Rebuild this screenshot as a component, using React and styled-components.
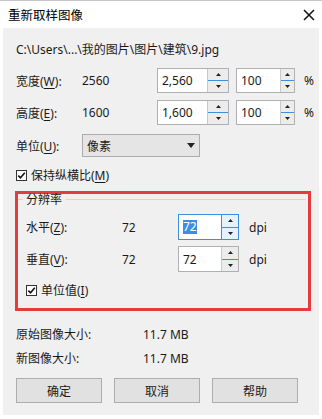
import React from 'react';
import styled, { createGlobalStyle } from 'styled-components';

const GlobalStyle = createGlobalStyle`
  body {
    margin: 0;
    background: #ffffff;
    font-family: "Noto Sans", "Noto Sans CJK SC", sans-serif;
    font-size: 12px;
    color: #1a1a1a;
  }
`;

const Window = styled.div`
  width: 322px;
  height: 419px;
  box-sizing: border-box;
  border-top: 1px solid #c6c6c6;
  background: #ffffff;
  display: flex;
  flex-direction: column;
`;

const TitleBar = styled.div`
  height: 27px;
  display: flex;
  align-items: center;
  justify-content: space-between;
  padding: 0 7px 0 8px;
  font-size: 12.5px;
  color: #000;
`;

const Close = styled.svg`
  width: 12px;
  height: 12px;
`;

const Content = styled.div`
  margin: 0 3px;
  height: 387px;
  background: #f0f0f0;
  display: flex;
  flex-direction: column;
  padding-left: 13px;
`;

const Row = styled.div`
  display: flex;
  align-items: center;
  height: ${(p) => p.$h || 20}px;
  margin-top: ${(p) => p.$mt || 0}px;
`;

const Label = styled.span`
  width: ${(p) => p.$w}px;
  flex: none;
  white-space: nowrap;
`;

const Key = styled.span`
  text-decoration: underline;
  text-underline-offset: 2px;
`;

const SpinBox = styled.div`
  width: ${(p) => p.$w}px;
  height: 100%;
  box-sizing: border-box;
  flex: none;
  display: flex;
  background: #fff;
  border: 1px solid ${(p) => (p.$focus ? '#3b8fe0' : '#aeb0b5')};
`;

const Field = styled.div`
  flex: 1;
  display: flex;
  align-items: center;
  padding-left: 4px;
`;

const Selected = styled.span`
  background: #3b8ee4;
  color: #fff;
  line-height: 14px;
`;

const Spin = styled.div`
  width: ${(p) => p.$w}px;
  flex: none;
  display: flex;
  flex-direction: column;
  border-left: 1px solid ${(p) => (p.$focus ? '#3b8fe0' : '#c9c9c9')};
  background: ${(p) => (p.$focus ? '#e5f1fb' : '#ececec')};
`;

const SpinHalf = styled.div`
  flex: 1;
  display: flex;
  align-items: center;
  justify-content: center;
  & + & {
    border-top: 1px solid ${(p) => (p.$focus ? '#3b8fe0' : 'transparent')};
  }
`;

const Arrow = ({ up }) => (
  <svg width="5" height="3" viewBox="0 0 5 3">
    <polygon points={up ? '0,3 5,3 2.5,0' : '0,0 5,0 2.5,3'} fill="#222" />
  </svg>
);

const Spinner = ({ w, spinW, children, focus }) => (
  <SpinBox $w={w} $focus={focus}>
    <Field>{children}</Field>
    <Spin $w={spinW} $focus={focus}>
      <SpinHalf $focus={focus}>
        <Arrow up />
      </SpinHalf>
      <SpinHalf $focus={focus}>
        <Arrow />
      </SpinHalf>
    </Spin>
  </SpinBox>
);

const Unit = styled.span`
  margin-left: ${(p) => p.$ml}px;
`;

const Select = styled.div`
  width: 118px;
  height: 100%;
  box-sizing: border-box;
  border: 1px solid #adadad;
  background: #e5e5e5;
  display: flex;
  align-items: center;
  justify-content: space-between;
  padding: 0 4px 0 4px;
`;

const CheckRow = styled.label`
  display: flex;
  align-items: center;
  gap: 4px;
  height: 20px;
  margin-top: ${(p) => p.$mt}px;
  padding-left: ${(p) => p.$pl || 0}px;
`;

const Box = styled.span`
  width: 11px;
  height: 11px;
  box-sizing: border-box;
  border: 1px solid #333;
  background: #fff;
  display: flex;
  align-items: center;
  justify-content: center;
`;

const Check = () => (
  <Box>
    <svg width="9" height="9" viewBox="0 0 9 9">
      <polyline points="1.3,4.6 3.5,6.8 7.8,1.8" fill="none" stroke="#111" strokeWidth="1.6" />
    </svg>
  </Box>
);

const Highlight = styled.div`
  margin: 6px 0 0 -1px;
  width: 296px;
  height: 120px;
  box-sizing: border-box;
  border: 3px solid #e23c3e;
  display: flex;
  flex-direction: column;
`;

const GroupTitle = styled.div`
  display: flex;
  align-items: center;
  height: 12px;
  margin-top: -1px;
  padding-right: 2px;
  &::before {
    content: '';
    width: 5px;
    height: 1px;
    background: #d5d5d5;
    margin-right: 3px;
  }
  &::after {
    content: '';
    flex: 1;
    height: 1px;
    background: #d5d5d5;
    margin-left: 4px;
  }
`;

const GroupRow = styled(Row)`
  padding-left: 8px;
`;

const Buttons = styled.div`
  display: flex;
  gap: 12px;
  margin-top: 10px;
`;

const Button = styled.button`
  width: 86px;
  height: 25px;
  border: 1px solid #adadad;
  background: #e1e1e1;
  font: inherit;
  color: #1a1a1a;
  padding: 0;
`;

export default function App() {
  return (
    <>
      <GlobalStyle />
      <Window>
        <TitleBar>
          <span>重新取样图像</span>
          <Close viewBox="0 0 12 12">
            <path d="M1 1 L11 11 M11 1 L1 11" stroke="#111" strokeWidth="1.5" />
          </Close>
        </TitleBar>
        <Content>
          <Row $mt={11}>C:\Users\...\我的图片\图片\建筑\9.jpg</Row>
          <Row $h={25} $mt={9}>
            <Label $w={66}>宽度(<Key>W</Key>):</Label>
            <Label $w={75}>2560</Label>
            <Spinner w={72} spinW={20}>2,560</Spinner>
            <Unit $ml={7} />
            <Spinner w={59} spinW={13}>100</Spinner>
            <Unit $ml={9}>%</Unit>
          </Row>
          <Row $h={25} $mt={7}>
            <Label $w={66}>高度(<Key>E</Key>):</Label>
            <Label $w={75}>1600</Label>
            <Spinner w={72} spinW={20}>1,600</Spinner>
            <Unit $ml={7} />
            <Spinner w={59} spinW={13}>100</Spinner>
            <Unit $ml={9}>%</Unit>
          </Row>
          <Row $h={23} $mt={9}>
            <Label $w={66}>单位(<Key>U</Key>):</Label>
            <Select>
              <span>像素</span>
              <svg width="8" height="5" viewBox="0 0 8 5">
                <polygon points="0,0 8,0 4,5" fill="#222" />
              </svg>
            </Select>
          </Row>
          <CheckRow $mt={8}>
            <Check />
            <span>保持纵横比(<Key>M</Key>)</span>
          </CheckRow>
          <Highlight>
            <GroupTitle>分辨率</GroupTitle>
            <GroupRow $h={26} $mt={9}>
              <Label $w={96}>水平(<Key>Z</Key>):</Label>
              <Label $w={56}>72</Label>
              <Spinner w={61} spinW={16} focus>
                <Selected>72</Selected>
              </Spinner>
              <Unit $ml={10}>dpi</Unit>
            </GroupRow>
            <GroupRow $h={26} $mt={6}>
              <Label $w={96}>垂直(<Key>V</Key>):</Label>
              <Label $w={56}>72</Label>
              <Spinner w={61} spinW={16}>72</Spinner>
              <Unit $ml={10}>dpi</Unit>
            </GroupRow>
            <CheckRow $mt={8} $pl={8}>
              <Check />
              <span>单位值(<Key>I</Key>)</span>
            </CheckRow>
          </Highlight>
          <Row $mt={13}>
            <Label $w={127}>原始图像大小:</Label>
            <span>11.7 MB</span>
          </Row>
          <Row $mt={4}>
            <Label $w={127}>新图像大小:</Label>
            <span>11.7 MB</span>
          </Row>
          <Buttons>
            <Button>确定</Button>
            <Button>取消</Button>
            <Button>帮助</Button>
          </Buttons>
        </Content>
      </Window>
    </>
  );
}
